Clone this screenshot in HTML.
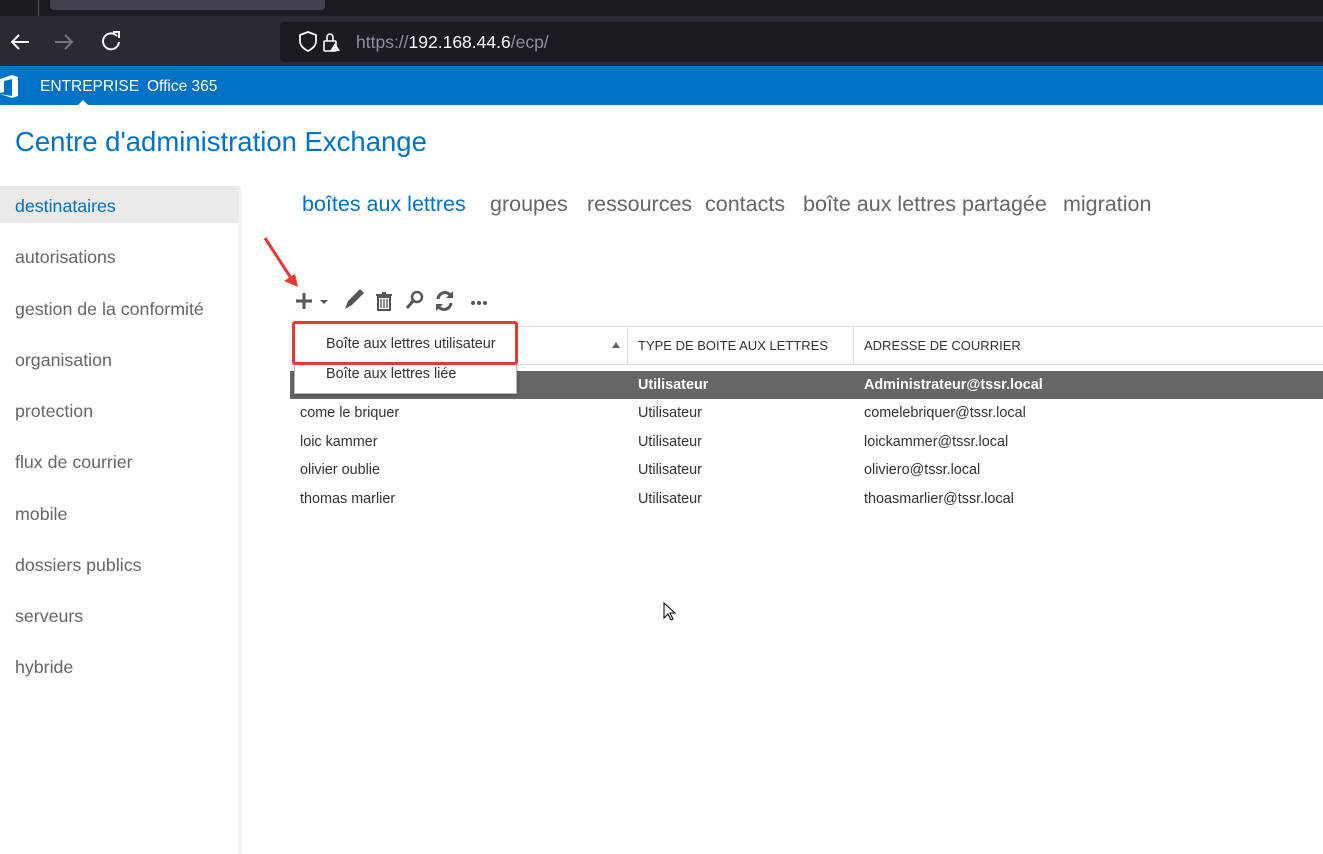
<!DOCTYPE html>
<html><head><meta charset="utf-8"><style>
*{margin:0;padding:0;box-sizing:border-box}
body{width:1323px;height:854px;overflow:hidden;background:#fff;font-family:"Liberation Sans",sans-serif;position:relative}
.a{position:absolute}
.nav div{position:absolute;left:15px;font-size:17.8px;color:#666}
.tabs span{position:absolute;top:192px;font-size:21.5px;color:#666}
.row{position:absolute;left:290px;width:1033px;height:29px;font-size:14.4px;color:#333}
.row span{position:absolute;top:6px}
</style></head><body>
<div class="a" style="left:0;top:0;width:1323px;height:16px;background:#1c1b22"></div>
<div class="a" style="left:38px;top:0;width:1px;height:16px;background:#555"></div>
<div class="a" style="left:50px;top:0;width:275px;height:10px;background:#42414d;border-radius:0 0 4px 4px"></div>
<div class="a" style="left:0;top:16px;width:1323px;height:50px;background:#2b2a33"></div>
<div class="a" style="left:280px;top:22px;width:1043px;height:40px;background:#1c1b22;border-radius:4px 0 0 4px"></div>
<svg class="a" style="left:0;top:16px" width="360" height="50">
<g stroke="#fbfbfe" stroke-width="2" fill="none"><path d="M29 26H12M19 19l-7 7 7 7"/></g>
<g stroke="#77767c" stroke-width="2" fill="none"><path d="M55 26h17M65 19l7 7-7 7"/></g>
<g stroke="#fbfbfe" stroke-width="2" fill="none"><path d="M117 20a8 8 0 1 0 2 6"/><path d="M113 16h6v6"/></g>
<path d="M300 19l8-3 8 3v6c0 5-4 8-8 10-4-2-8-5-8-10z" stroke="#fbfbfe" stroke-width="1.8" fill="none"/>
<rect x="324" y="25" width="12" height="10" rx="1" stroke="#fbfbfe" stroke-width="1.6" fill="none"/><path d="M327 25v-4a3 3 0 0 1 6 0v4" stroke="#fbfbfe" stroke-width="1.6" fill="none"/><path d="M335 27l5 8h-10z" fill="#fbfbfe"/>
</svg>
<div class="a" style="left:356px;top:32px;font-size:17.5px;color:#8f8f9d">https://<span style="color:#fbfbfe">192.168.44.6</span>/ecp/</div>
<div class="a" style="left:0;top:66px;width:1323px;height:39px;background:#0072c6"></div>
<svg class="a" style="left:0;top:75px" width="20" height="24"><path d="M0 4l12-4 6 2v19l-6 2-12-4 12 2V4L4 6v11l-4 1z" fill="#fff"/></svg>
<div class="a" style="left:40px;top:78px;font-size:15.5px;color:#fff">ENTREPRISE</div>
<div class="a" style="left:147px;top:78px;font-size:15.5px;color:#fff">Office 365</div>
<div class="a" style="left:78px;top:100px;width:0;height:0;border:5px solid transparent;border-bottom-color:#fff;border-top:none"></div>
<div class="a" style="left:15px;top:126px;font-size:27.5px;color:#0072c6">Centre d'administration Exchange</div>
<div class="a" style="left:0;top:186px;width:239px;height:37px;background:#eaeaea"></div>
<div class="a" style="left:239px;top:186px;width:2px;height:668px;background:#f2f2f2"></div>
<div class="nav">
<div style="top:196px;color:#0072c6">destinataires</div>
<div style="top:247px">autorisations</div>
<div style="top:299px">gestion de la conformité</div>
<div style="top:350px">organisation</div>
<div style="top:401px">protection</div>
<div style="top:452px">flux de courrier</div>
<div style="top:504px">mobile</div>
<div style="top:555px">dossiers publics</div>
<div style="top:606px">serveurs</div>
<div style="top:657px">hybride</div>
</div>
<div class="tabs">
<span style="left:302px;color:#0072c6">boîtes aux lettres</span>
<span style="left:490px">groupes</span>
<span style="left:587px">ressources</span>
<span style="left:705px">contacts</span>
<span style="left:803px">boîte aux lettres partagée</span>
<span style="left:1063px">migration</span>
</div>
<svg class="a" style="left:260px;top:235px" width="240" height="80">
<path d="M5 3l26 40" stroke="#e53935" stroke-width="3"/><path d="M38 52l-14-6 11-7z" fill="#e53935"/>
<path d="M44 58v16M36 66h16" stroke="#555" stroke-width="3"/><path d="M60 65h8l-4 4z" fill="#555"/>
<path d="M85 74l3-8 12-12 4 4-12 12z" fill="#555"/>
<path d="M116 60h16M122 58h4M118 62h12v13h-12z" stroke="#555" stroke-width="2" fill="none"/>
<path d="M121 64v9M124 64v9M127 64v9" stroke="#555" stroke-width="1.3"/>
<circle cx="157" cy="62" r="5" stroke="#555" stroke-width="2.5" fill="none"/><path d="M153 66l-6 7" stroke="#555" stroke-width="3"/>
<path d="M178 64a7 7 0 0 1 13-3M191 68a7 7 0 0 1-13 3" stroke="#555" stroke-width="3" fill="none"/><path d="M193 56v7h-7zM176 76v-7h7z" fill="#555"/>
<circle cx="213" cy="68" r="2" fill="#555"/><circle cx="219" cy="68" r="2" fill="#555"/><circle cx="225" cy="68" r="2" fill="#555"/>
</svg>
<div class="a" style="left:290px;top:326px;width:1033px;height:1px;background:#ddd"></div>
<div class="a" style="left:290px;top:364px;width:1033px;height:1px;background:#ddd"></div>
<div class="a" style="left:627px;top:327px;width:1px;height:37px;background:#ddd"></div>
<div class="a" style="left:853px;top:327px;width:1px;height:37px;background:#ddd"></div>
<div class="a" style="left:612px;top:342px;border:4px solid transparent;border-bottom:6px solid #666;border-top:none"></div>
<div class="a" style="left:638px;top:338px;font-size:13px;color:#333">TYPE DE BOITE AUX LETTRES</div>
<div class="a" style="left:864px;top:338px;font-size:13px;color:#333">ADRESSE DE COURRIER</div>
<div class="row" style="top:371px;background:#666;color:#fff;font-weight:bold;height:28px"><span style="left:348px">Utilisateur</span><span style="left:574px">Administrateur@tssr.local</span></div>
<div class="row" style="top:399px"><span style="left:10px">come le briquer</span><span style="left:348px">Utilisateur</span><span style="left:574px">comelebriquer@tssr.local</span></div>
<div class="row" style="top:428px"><span style="left:10px">loic kammer</span><span style="left:348px">Utilisateur</span><span style="left:574px">loickammer@tssr.local</span></div>
<div class="row" style="top:456px"><span style="left:10px">olivier oublie</span><span style="left:348px">Utilisateur</span><span style="left:574px">oliviero@tssr.local</span></div>
<div class="row" style="top:485px"><span style="left:10px">thomas marlier</span><span style="left:348px">Utilisateur</span><span style="left:574px">thoasmarlier@tssr.local</span></div>
<div class="a" style="left:294px;top:322px;width:223px;height:72px;background:#fff;border:1px solid #bbb;box-shadow:0 1px 3px rgba(0,0,0,.3)"></div>
<div class="a" style="left:292px;top:321px;width:226px;height:44px;border:3px solid #e53935;border-radius:3px"></div>
<div class="a" style="left:326px;top:336px;font-size:14.4px;color:#333">Boîte aux lettres utilisateur</div>
<div class="a" style="left:326px;top:366px;font-size:14.4px;color:#333">Boîte aux lettres liée</div>
<svg class="a" style="left:663px;top:602px" width="14" height="20"><path d="M1 1v15l4-4 3 6 2-1-3-6h5z" fill="#fff" stroke="#000"/></svg>
</body></html>
